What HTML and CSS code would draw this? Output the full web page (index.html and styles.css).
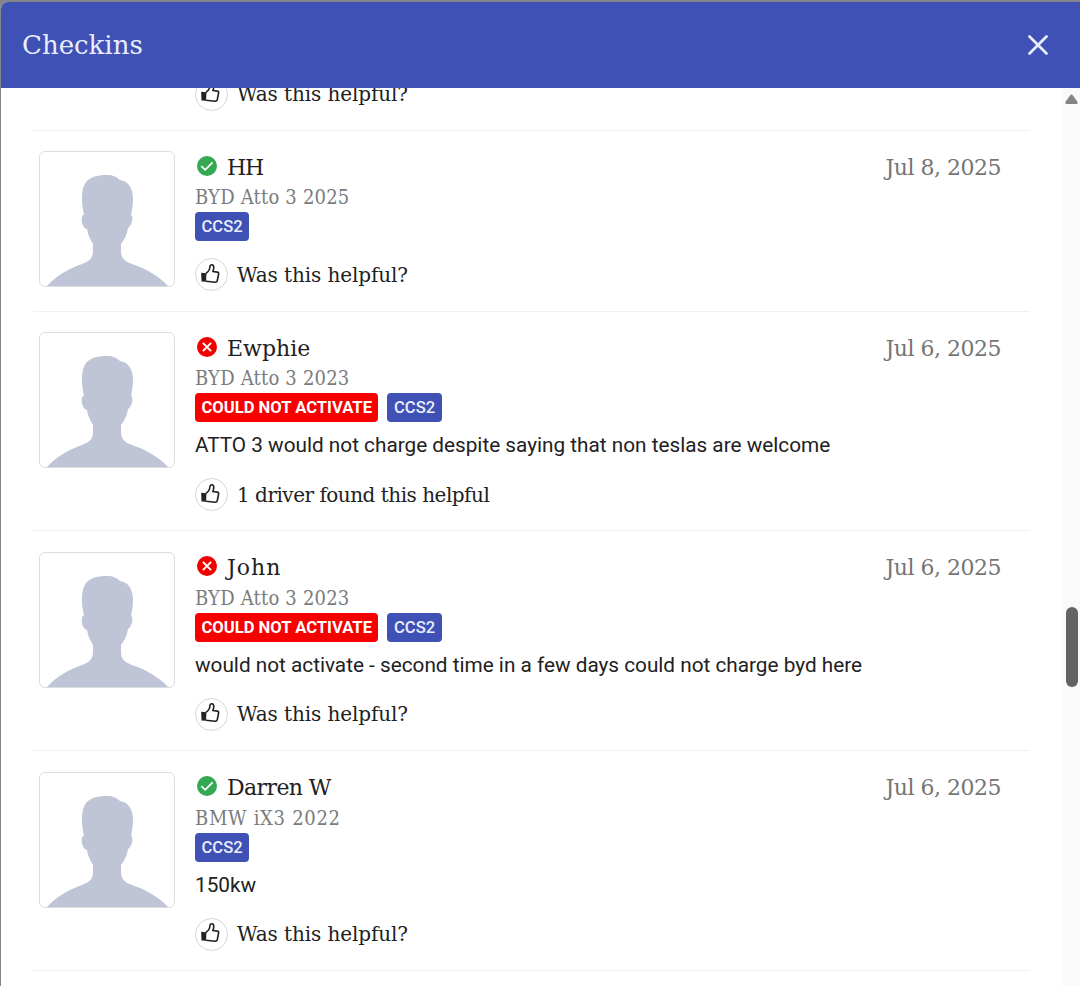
FILE: index.html
```html
<!DOCTYPE html>
<html lang="en">
<head>
<meta charset="utf-8">
<title>Checkins</title>
<link rel="stylesheet" href="styles.css">
</head>
<body>
<svg class="defs" aria-hidden="true">
  <symbol id="person" viewBox="0 0 134 134">
    <path fill="#bfc5d6" d="M7 134C18 122 31 116 42 112C50 109 53 106 53 98V92C50 87 48 83 47 77C43 76 41 70 42 65C42 63 43 63 44 63C41 49 41 37 46 30C51 24 59 23 67 23C73 23 77 25 80 28C88 29 93 36 93 47C93 53 92 58 91 63C94 64 92 74 88 76C87 83 84 88 81 92V98C81 106 84 109 92 112C104 116 118 123 128 134Z"/>
  </symbol>
  <symbol id="thumb" viewBox="0 0 20 22">
    <path fill="none" stroke="#222" stroke-width="1.6" stroke-linejoin="round" d="M6 10.2C8.5 8.8 9.7 6.8 10 3.5C10.2 1 13.7 1 13.8 4.5C13.8 6 13.4 7.2 12.8 8.5L17.3 9.1C18.4 9.3 18.8 10 18.6 11L17.3 17.5C17 18.8 16.5 19.3 15 19.2L6 18.3"/>
    <path fill="#222" d="M1.2 9.8L6.5 10.2L6 18.8L1.5 18.4Z"/>
  </symbol>
  <symbol id="ok" viewBox="0 0 20 20">
    <circle cx="10" cy="10" r="10" fill="#34a853"/>
    <path fill="none" stroke="#fff" stroke-width="1.8" d="M4.3 10.2L8.2 13.8L15.6 6.3"/>
  </symbol>
  <symbol id="fail" viewBox="0 0 20 20">
    <circle cx="10" cy="10" r="10" fill="#f20000"/>
    <path fill="none" stroke="#fff" stroke-width="2" d="M5.9 5.9L14.1 14.1M14.1 5.9L5.9 14.1"/>
  </symbol>
</svg>
<div class="dialog">
  <header class="header">
    <h1 class="title">Checkins</h1>
    <svg class="close" viewBox="0 0 20 20"><path d="M1.5 1.5L18.5 18.5M18.5 1.5L1.5 18.5"/></svg>
  </header>
  <div class="body">
    <main class="list">
      <section class="partial">
        <div class="helpful"><span class="vote"><svg><use href="#thumb"/></svg></span><span class="question">Was this helpful?</span></div>
      </section>
      <section class="checkin">
        <div class="avatar"><svg><use href="#person"/></svg></div>
        <div class="info">
          <div class="top"><svg class="status"><use href="#ok"/></svg><span class="name initials">HH</span><span class="date">Jul 8, 2025</span></div>
          <div class="vehicle">BYD Atto 3 2025</div>
          <div class="badges"><span class="badge">CCS2</span></div>
          <div class="helpful"><span class="vote"><svg><use href="#thumb"/></svg></span><span class="question">Was this helpful?</span></div>
        </div>
      </section>
      <section class="checkin tall">
        <div class="avatar"><svg><use href="#person"/></svg></div>
        <div class="info">
          <div class="top"><svg class="status"><use href="#fail"/></svg><span class="name">Ewphie</span><span class="date">Jul 6, 2025</span></div>
          <div class="vehicle">BYD Atto 3 2023</div>
          <div class="badges"><span class="badge error">COULD NOT ACTIVATE</span><span class="badge">CCS2</span></div>
          <p class="comment">ATTO 3 would not charge despite saying that non teslas are welcome</p>
          <div class="helpful"><span class="vote"><svg><use href="#thumb"/></svg></span><span class="question count">1 driver found this helpful</span></div>
        </div>
      </section>
      <section class="checkin tall">
        <div class="avatar"><svg><use href="#person"/></svg></div>
        <div class="info">
          <div class="top"><svg class="status"><use href="#fail"/></svg><span class="name short">John</span><span class="date">Jul 6, 2025</span></div>
          <div class="vehicle">BYD Atto 3 2023</div>
          <div class="badges"><span class="badge error">COULD NOT ACTIVATE</span><span class="badge">CCS2</span></div>
          <p class="comment">would not activate - second time in a few days could not charge byd here</p>
          <div class="helpful"><span class="vote"><svg><use href="#thumb"/></svg></span><span class="question">Was this helpful?</span></div>
        </div>
      </section>
      <section class="checkin tall">
        <div class="avatar"><svg><use href="#person"/></svg></div>
        <div class="info">
          <div class="top"><svg class="status"><use href="#ok"/></svg><span class="name full">Darren W</span><span class="date">Jul 6, 2025</span></div>
          <div class="vehicle wide">BMW iX3 2022</div>
          <div class="badges"><span class="badge">CCS2</span></div>
          <p class="comment">150kw</p>
          <div class="helpful"><span class="vote"><svg><use href="#thumb"/></svg></span><span class="question">Was this helpful?</span></div>
        </div>
      </section>
    </main>
    <div class="scrollbar">
      <svg class="arrow" viewBox="0 0 13 10"><path d="M5.6 .8Q6.5 0 7.4 .8L12.6 8Q13.2 9.8 11.5 10H1.5Q-.2 9.8 .4 8Z"/></svg>
      <div class="thumb"></div>
    </div>
  </div>
</div>
</body>
</html>
```
FILE: styles.css
```css
* { box-sizing: border-box; }
body {
  margin: 0;
  height: 986px;
  overflow: hidden;
  background: #85868c;
  color: #212121;
  font-family: "Roboto Slab", "DejaVu Serif", serif;
  padding: 2px 0 0 1px;
}
.defs { display: none; }
.dialog {
  height: 984px;
  background: #fff;
  border-radius: 7px 0 0 0;
  overflow: hidden;
}
.header {
  height: 86px;
  background: #3f51b5;
  color: #e8eefc;
  display: flex;
  align-items: center;
  justify-content: space-between;
  padding: 0 32px 0 21px;
}
.title { margin: 0; font-size: 26px; font-weight: 400; }
.close { width: 20px; height: 20px; stroke: #e8eefc; stroke-width: 2.7; stroke-linecap: round; }
.body { display: flex; height: 898px; }
.list { flex: 1; padding: 0 32px; }
.partial {
  height: 42.5px;
  overflow: hidden;
  display: flex;
  align-items: flex-end;
  padding: 0 0 19px 162px;
  border-bottom: 1px solid #f0f0f0;
}
.checkin {
  display: flex;
  gap: 20px;
  height: 181px;
  padding: 20.5px 29px 0 6px;
  border-bottom: 1px solid #f0f0f0;
}
.tall { height: 219.8px; }
.avatar {
  width: 136px;
  height: 136px;
  flex: none;
  border: 1px solid #dcdde0;
  border-radius: 6px;
  overflow: hidden;
}
.avatar svg { display: block; width: 134px; height: 134px; }
.info { flex: 1; min-width: 0; padding-top: 1px; }
.top { display: flex; align-items: center; height: 30px; }
.status { width: 20px; height: 20px; margin: 0 10px 3px 2px; }
.name { font-size: 22px; line-height: 30px; padding-top: 1px; }
.initials { letter-spacing: -1.2px; }
.short { letter-spacing: 1px; }
.full { letter-spacing: -.6px; }
.date { margin-left: auto; padding-top: 1px; font-size: 22px; line-height: 30px; letter-spacing: -.5px; color: #757575; }
.vehicle {
  font-family: "Roboto Slab", "DejaVu Serif Condensed", "DejaVu Serif", serif;
  font-stretch: condensed;
  font-size: 20px;
  line-height: 30px;
  height: 30px;
  letter-spacing: .2px;
  color: #7b7b7b;
}
.wide { letter-spacing: .7px; }
.badges { display: flex; gap: 9px; height: 29px; }
.badge {
  font: 500 16.6px/30px Roboto, sans-serif;
  color: #e9eefc;
  background: #3f51b5;
  border-radius: 4px;
  padding: 0 6.5px;
}
.badge.error { background: #f90000; font-weight: 700; color: #fff; }
.comment { margin: 8px 0 -7px; font: 400 20.75px/30px Roboto, sans-serif; height: 36px; }
.helpful { display: flex; align-items: center; gap: 9px; height: 33px; white-space: nowrap; }
.info .helpful { margin-top: 17px; }
.partial .helpful { flex: none; }
.tall .helpful { margin-top: 19px; }
.vote {
  width: 33px;
  height: 33px;
  border: 1px solid #d5d5d5;
  border-radius: 50%;
  display: flex;
  align-items: center;
  justify-content: center;
}
.vote svg { width: 20px; height: 22px; margin: 0 4px 2px 0; }
.question { font-size: 20px; line-height: 30px; letter-spacing: -.1px; }
.count { letter-spacing: -.5px; }
.scrollbar {
  width: 18px;
  background: #fafafa;
  display: flex;
  flex-direction: column;
  align-items: center;
  padding: 6px 0 0 1px;
}
.arrow { width: 13px; height: 10px; fill: #858585; }
.thumb { width: 12px; height: 80px; margin-top: 503px; border-radius: 6px; background: #636363; }
```
